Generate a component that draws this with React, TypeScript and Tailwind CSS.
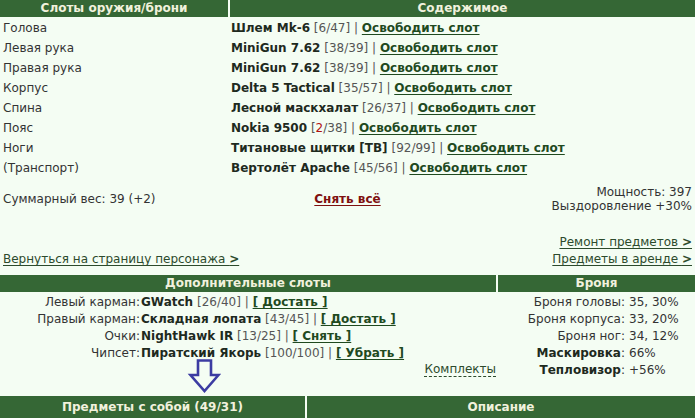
import React from "react";

type Slot = { label: string; name: string; cond: React.ReactNode };

const slots: Slot[] = [
  { label: "Голова", name: "Шлем Mk-6", cond: "6/47" },
  { label: "Левая рука", name: "MiniGun 7.62", cond: "38/39" },
  { label: "Правая рука", name: "MiniGun 7.62", cond: "38/39" },
  { label: "Корпус", name: "Delta 5 Tactical", cond: "35/57" },
  { label: "Спина", name: "Лесной маскхалат", cond: "26/37" },
  {
    label: "Пояс",
    name: "Nokia 9500",
    cond: (
      <>
        <span className="text-[#b01010]">2</span>/38
      </>
    ),
  },
  { label: "Ноги", name: "Титановые щитки [ТВ]", cond: "92/99" },
  { label: "(Транспорт)", name: "Вертолёт Apache", cond: "45/56" },
];

const extra = [
  { label: "Левый карман:", name: "GWatch", cond: "26/40", action: "[ Достать ]" },
  { label: "Правый карман:", name: "Складная лопата", cond: "43/45", action: "[ Достать ]" },
  { label: "Очки:", name: "NightHawk IR", cond: "13/25", action: "[ Снять ]" },
  { label: "Чипсет:", name: "Пиратский Якорь", cond: "100/100", action: "[ Убрать ]" },
];

const armor: { label: React.ReactNode; value: string }[] = [
  { label: "Броня головы:", value: "35, 30%" },
  { label: "Броня корпуса:", value: "33, 20%" },
  { label: "Броня ног:", value: "34, 12%" },
  {
    label: (
      <>
        <b className="text-[#1e2a1e]">Маскировка</b>:
      </>
    ),
    value: "66%",
  },
  {
    label: (
      <>
        <b className="text-[#1e2a1e]">Тепловизор</b>:
      </>
    ),
    value: "+56%",
  },
];

function Head({ children, tall }: { children: React.ReactNode; tall?: boolean }) {
  return (
    <div
      className={
        tall
          ? "h-[22px] bg-[#356735] text-center text-[12px] font-bold leading-[22px] text-[#f1f1dd]"
          : "h-[17px] bg-[#356735] text-center text-[12px] font-bold leading-[17px] text-[#f1f1dd]"
      }
    >
      {children}
    </div>
  );
}

function Sep() {
  return <span className="text-[#555]"> | </span>;
}

function Link({ children, bold = true }: { children: React.ReactNode; bold?: boolean }) {
  return (
    <a
      href="#"
      className={
        bold
          ? "font-bold text-[#1f4a1f] underline underline-offset-2"
          : "text-[#2c4a2c] underline underline-offset-2"
      }
    >
      {children}
    </a>
  );
}

function DownArrow() {
  return (
    <svg width="36" height="36" viewBox="0 0 36 36" className="absolute left-[185px] top-[358px]">
      <polygon
        points="13,2.5 26,2.5 26,17 33.5,17 19.5,33 5.5,17 13,17"
        fill="none"
        stroke="#3c3ca2"
        strokeWidth="2.6"
        strokeLinejoin="miter"
      />
    </svg>
  );
}

export default function App() {
  return (
    <div className="relative h-[418px] w-[695px] overflow-hidden bg-[#f4fdf3] font-['DejaVu_Sans',Verdana,sans-serif] text-[12px] text-[#333]">
      {/* equipped slots */}
      <div className="grid grid-cols-[228px_1fr] gap-x-[2px]">
        <Head>Слоты оружия/брони</Head>
        <Head>Содержимое</Head>
      </div>
      <div className="pt-px">
        {slots.map((s, i) => (
          <div key={i} className="grid h-[20px] grid-cols-[230px_1fr] items-center">
            <span className="pl-[3px]">{s.label}</span>
            <span className="pl-[1px] whitespace-nowrap">
              <b className="text-[#1e2a1e]">{s.name}</b> <span className="text-[#555]">[{s.cond}]</span>
              <Sep />
              <Link>Освободить слот</Link>
            </span>
          </div>
        ))}
      </div>

      {/* totals */}
      <div className="mt-[7px] grid grid-cols-[1fr_auto_1fr] items-center px-[3px]">
        <span>Суммарный вес: 39 (+2)</span>
        <a href="#" className="font-bold text-[#7f1010] underline underline-offset-2">
          Снять всё
        </a>
        <div className="text-right leading-[14px]">
          <div>Мощность: 397</div>
          <div>Выздоровление +30%</div>
        </div>
      </div>

      {/* navigation */}
      <div className="mt-[21px] flex items-end justify-between px-[3px] leading-[17px]">
        <Link bold={false}>
          Вернуться на страницу персонажа <b>&gt;</b>
        </Link>
        <div className="flex flex-col items-end">
          <Link bold={false}>
            Ремонт предметов <b>&gt;</b>
          </Link>
          <Link bold={false}>
            Предметы в аренде <b>&gt;</b>
          </Link>
        </div>
      </div>

      {/* extra slots and armour */}
      <div className="mt-[7px] grid grid-cols-[496px_1fr] gap-x-[2px]">
        <Head>Дополнительные слоты</Head>
        <Head>Броня</Head>
        <div className="pt-px">
          {extra.map((e, i) => (
            <div key={i} className="grid h-[17px] grid-cols-[140px_1fr] items-center">
              <span className="text-right">{e.label}</span>
              <span className="pl-[1px] whitespace-nowrap">
                <b className="text-[#1e2a1e]">{e.name}</b> <span className="text-[#555]">[{e.cond}]</span>
                <Sep />
                <Link>{e.action}</Link>
              </span>
            </div>
          ))}
          <div className="flex h-[17px] items-center justify-end">
            <span className="border-b border-dashed border-[#2c4a2c] leading-[13px] text-[#2c4a2c]">Комплекты</span>
          </div>
        </div>
        <div className="pt-px">
          {armor.map((a, i) => (
            <div key={i} className="grid h-[17px] grid-cols-[127px_1fr] items-center">
              <span className="text-right whitespace-nowrap">{a.label}</span>
              <span className="pl-[4px]">{a.value}</span>
            </div>
          ))}
        </div>
      </div>

      {/* carried items */}
      <div className="mt-[18px] grid grid-cols-[305px_1fr] gap-x-[2px]">
        <Head tall>Предметы с собой (49/31)</Head>
        <Head tall>Описание</Head>
      </div>

      <DownArrow />
    </div>
  );
}
